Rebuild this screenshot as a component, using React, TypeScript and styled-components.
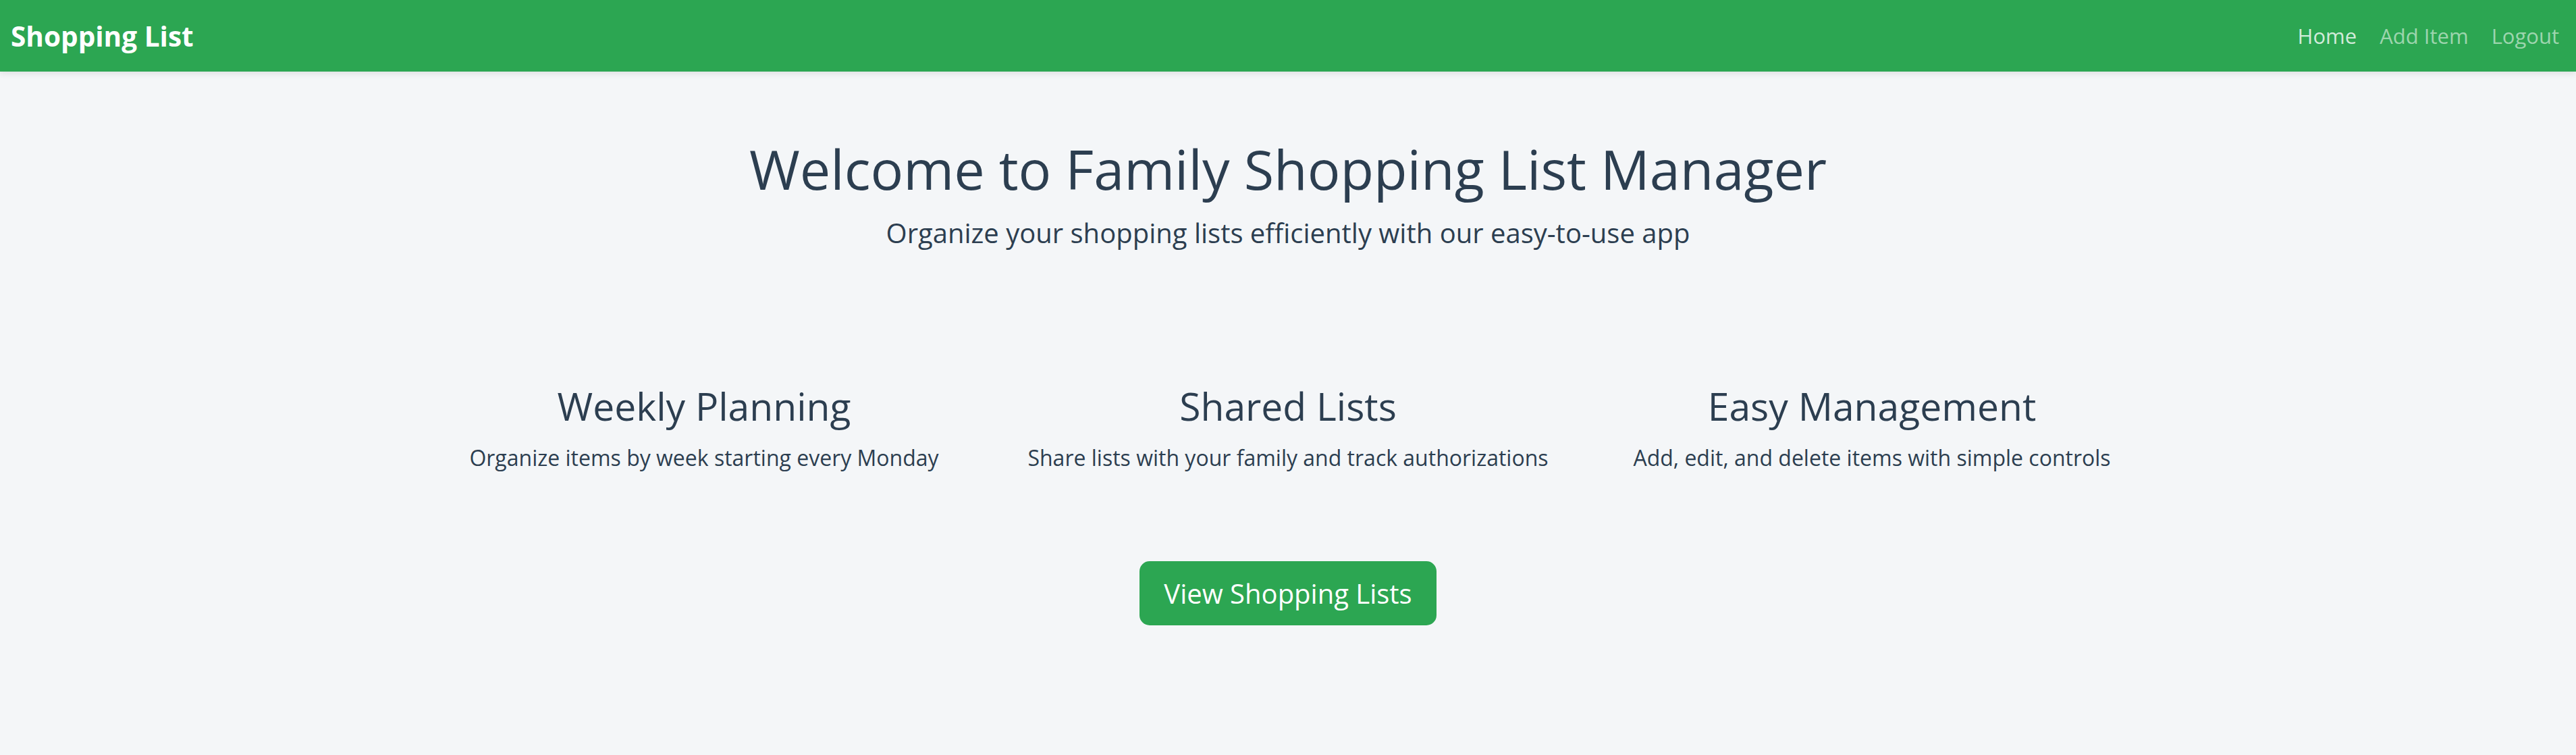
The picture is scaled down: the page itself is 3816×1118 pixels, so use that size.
import React from "react";
import styled, { createGlobalStyle } from "styled-components";

const GlobalStyle = createGlobalStyle`
  html, body {
    margin: 0;
    padding: 0;
    background: #f4f6f8;
    font-family: "Open Sans", Lato, sans-serif;
    color: #2c3e50;
  }
  * { box-sizing: border-box; }
`;

const NavBar = styled.nav`
  height: 106px;
  background: #2ca652;
  display: flex;
  align-items: center;
  justify-content: space-between;
  padding: 0 25px 0 16px;
  box-shadow: 0 4px 8px rgba(0, 0, 0, 0.08);
`;

const Brand = styled.a`
  color: #ffffff;
  font-size: 40.5px;
  font-weight: 700;
  text-decoration: none;
`;

const NavLinks = styled.div`
  display: flex;
  align-items: center;
  gap: 34px;
`;

const NavLink = styled.a<{ $active?: boolean }>`
  color: ${(p) => (p.$active ? "rgba(255,255,255,0.8)" : "rgba(255,255,255,0.55)")};
  font-size: 31px;
  text-decoration: none;
`;

const Main = styled.main`
  display: flex;
  flex-direction: column;
  align-items: center;
  padding-top: 95px;
`;

const Title = styled.h1`
  margin: 0;
  font-size: 81px;
  line-height: 1.2;
  font-weight: 400;
`;

const Lead = styled.p`
  margin: 23px 0 0;
  font-size: 40px;
  line-height: 1.2;
`;

const Features = styled.section`
  margin-top: 198px;
  display: grid;
  grid-template-columns: repeat(3, 865px);
`;

const Feature = styled.div`
  display: flex;
  flex-direction: column;
  align-items: center;
  text-align: center;
`;

const FeatureTitle = styled.h3`
  margin: 0;
  font-size: 57px;
  line-height: 1.2;
  font-weight: 400;
`;

const FeatureText = styled.p`
  margin: 23px 0 0;
  font-size: 32px;
  line-height: 1.2;
`;

const PrimaryButton = styled.button`
  margin-top: 134px;
  width: 440px;
  height: 95px;
  border: none;
  border-radius: 15px;
  background: #2ca652;
  color: #ffffff;
  font-family: inherit;
  font-size: 40px;
  cursor: pointer;
`;

const features = [
  { title: "Weekly Planning", text: "Organize items by week starting every Monday" },
  { title: "Shared Lists", text: "Share lists with your family and track authorizations" },
  { title: "Easy Management", text: "Add, edit, and delete items with simple controls" },
];

export default function App() {
  return (
    <>
      <GlobalStyle />
      <NavBar>
        <Brand href="#">Shopping List</Brand>
        <NavLinks>
          <NavLink href="#" $active>Home</NavLink>
          <NavLink href="#">Add Item</NavLink>
          <NavLink href="#">Logout</NavLink>
        </NavLinks>
      </NavBar>
      <Main>
        <Title>Welcome to Family Shopping List Manager</Title>
        <Lead>Organize your shopping lists efficiently with our easy-to-use app</Lead>
        <Features>
          {features.map((f) => (
            <Feature key={f.title}>
              <FeatureTitle>{f.title}</FeatureTitle>
              <FeatureText>{f.text}</FeatureText>
            </Feature>
          ))}
        </Features>
        <PrimaryButton>View Shopping Lists</PrimaryButton>
      </Main>
    </>
  );
}
